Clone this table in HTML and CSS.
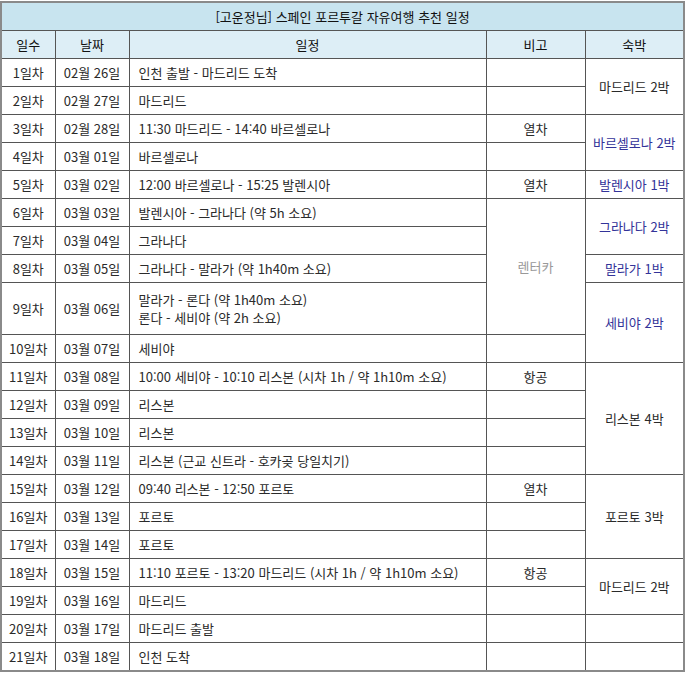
FILE: index.html
```html
<!DOCTYPE html>
<html lang="ko">
<head>
<meta charset="utf-8">
<link rel="stylesheet" href="styles.css">
</head>
<body>
<table class="plan">
  <colgroup>
    <col class="c-day"><col class="c-date"><col class="c-sched"><col class="c-note"><col class="c-stay">
  </colgroup>
  <thead>
    <tr><th class="title" colspan="5">[고운정님] 스페인 포르투갈 자유여행 추천 일정</th></tr>
    <tr class="head"><th>일수</th><th>날짜</th><th>일정</th><th>비고</th><th>숙박</th></tr>
  </thead>
  <tbody>
    <tr><td>1일차</td><td>02월 26일</td><td class="s">인천 출발 - 마드리드 도착</td><td></td><td rowspan="2">마드리드 2박</td></tr>
    <tr><td>2일차</td><td>02월 27일</td><td class="s">마드리드</td><td></td></tr>
    <tr><td>3일차</td><td>02월 28일</td><td class="s">11:30 마드리드 - 14:40 바르셀로나</td><td>열차</td><td rowspan="2" class="blue">바르셀로나 2박</td></tr>
    <tr><td>4일차</td><td>03월 01일</td><td class="s">바르셀로나</td><td></td></tr>
    <tr><td>5일차</td><td>03월 02일</td><td class="s">12:00 바르셀로나 - 15:25 발렌시아</td><td>열차</td><td class="blue">발렌시아 1박</td></tr>
    <tr><td>6일차</td><td>03월 03일</td><td class="s">발렌시아 - 그라나다 (약 5h 소요)</td><td rowspan="4" class="gray">렌터카</td><td rowspan="2" class="blue">그라나다 2박</td></tr>
    <tr><td>7일차</td><td>03월 04일</td><td class="s">그라나다</td></tr>
    <tr><td>8일차</td><td>03월 05일</td><td class="s">그라나다 - 말라가 (약 1h40m 소요)</td><td class="blue">말라가 1박</td></tr>
    <tr class="tall"><td>9일차</td><td>03월 06일</td><td class="s">말라가 - 론다 (약 1h40m 소요)<br>론다 - 세비야 (약 2h 소요)</td><td rowspan="2" class="blue">세비야 2박</td></tr>
    <tr><td>10일차</td><td>03월 07일</td><td class="s">세비야</td><td></td></tr>
    <tr><td>11일차</td><td>03월 08일</td><td class="s">10:00 세비야 - 10:10 리스본 (시차 1h / 약 1h10m 소요)</td><td>항공</td><td rowspan="4">리스본 4박</td></tr>
    <tr><td>12일차</td><td>03월 09일</td><td class="s">리스본</td><td></td></tr>
    <tr><td>13일차</td><td>03월 10일</td><td class="s">리스본</td><td></td></tr>
    <tr><td>14일차</td><td>03월 11일</td><td class="s">리스본 (근교 신트라 - 호카곶 당일치기)</td><td></td></tr>
    <tr><td>15일차</td><td>03월 12일</td><td class="s">09:40 리스본 - 12:50 포르토</td><td>열차</td><td rowspan="3">포르토 3박</td></tr>
    <tr><td>16일차</td><td>03월 13일</td><td class="s">포르토</td><td></td></tr>
    <tr><td>17일차</td><td>03월 14일</td><td class="s">포르토</td><td></td></tr>
    <tr><td>18일차</td><td>03월 15일</td><td class="s">11:10 포르토 - 13:20 마드리드 (시차 1h / 약 1h10m 소요)</td><td>항공</td><td rowspan="2">마드리드 2박</td></tr>
    <tr><td>19일차</td><td>03월 16일</td><td class="s">마드리드</td><td></td></tr>
    <tr><td>20일차</td><td>03월 17일</td><td class="s">마드리드 출발</td><td></td><td></td></tr>
    <tr><td>21일차</td><td>03월 18일</td><td class="s">인천 도착</td><td></td><td></td></tr>
  </tbody>
</table>
</body>
</html>
```

FILE: styles.css
```css
html, body {
  margin: 0;
  padding: 0;
  background: #ffffff;
}
body {
  padding: 1px 0 0 0;
  font-family: "Noto Sans CJK KR", "Noto Sans", sans-serif;
  font-size: 13px;
  color: #2a2a2a;
}
.plan {
  border-collapse: collapse;
  table-layout: fixed;
  width: 685px;
  border: 2px solid #8a8a8a;
}
.c-day { width: 54px; }
.c-date { width: 74px; }
.c-sched { width: 357px; }
.c-note { width: 99px; }
.c-stay { width: 99px; }

.plan th, .plan td {
  border: 1px solid #555555;
  height: 27px;
  padding: 0 4px;
  line-height: 18px;
  text-align: center;
  vertical-align: middle;
  white-space: nowrap;
  font-weight: normal;
}
.plan th {
  color: #111111;
}
.plan th.title {
  background: #c8e4ef;
  height: 27px;
}
.plan tr.head th {
  background: #ddeef6;
}
.plan td.s {
  text-align: left;
  padding-left: 9px;
}
.plan tr.tall td {
  height: 51px;
}
.plan td.blue {
  color: #333399;
}
.plan td.gray {
  color: #999999;
}
```
